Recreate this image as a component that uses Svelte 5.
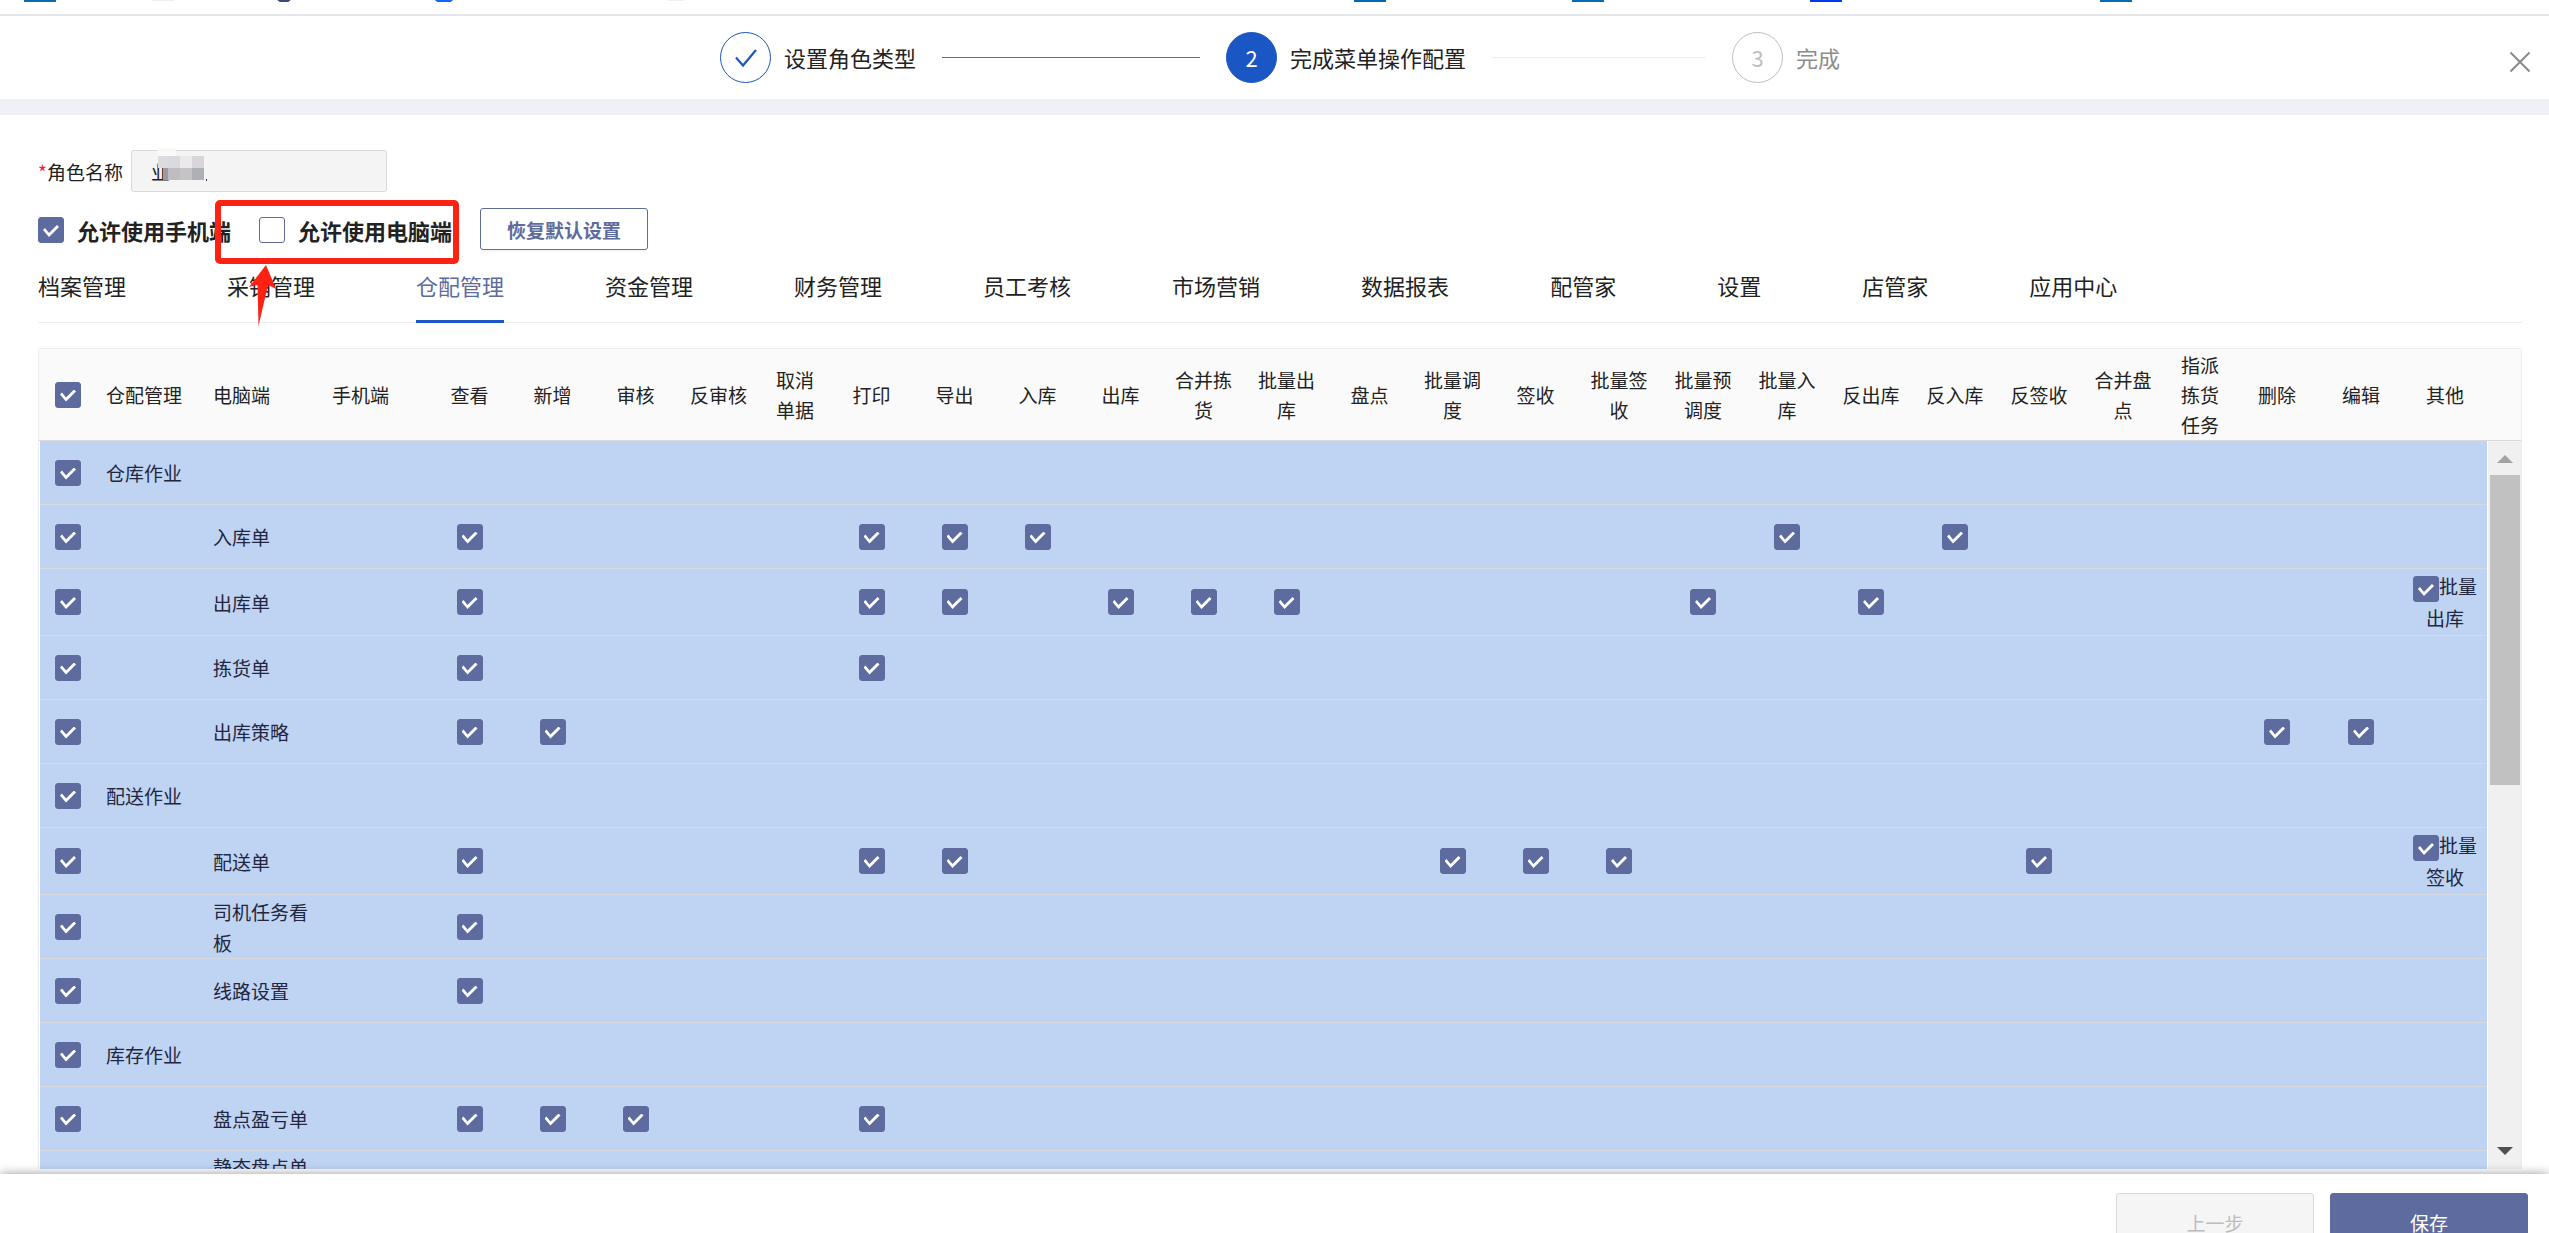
<script>
  const tabs = ['档案管理', '采销管理', '仓配管理', '资金管理', '财务管理', '员工考核', '市场营销', '数据报表', '配管家', '设置', '店管家', '应用中心'];
  const activeTab = '仓配管理';

  const actions = [
    ['查看', 83], ['新增', 83], ['审核', 83], ['反审核', 83], ['取消单据', 70], ['打印', 83], ['导出', 83],
    ['入库', 83], ['出库', 83], ['合并拣货', 83], ['批量出库', 83], ['盘点', 83], ['批量调度', 83], ['签收', 83],
    ['批量签收', 84], ['批量预调度', 84], ['批量入库', 84], ['反出库', 84], ['反入库', 84], ['反签收', 84],
    ['合并盘点', 84], ['指派拣货任务', 70], ['删除', 84], ['编辑', 84], ['其他', 84]
  ];
  const widths = [56, 107, 119, 106, ...actions.map((a) => a[1])];

  const rows = [
    { group: '仓库作业' },
    { name: '入库单', on: ['查看', '打印', '导出', '入库', '批量入库', '反入库'] },
    { name: '出库单', on: ['查看', '打印', '导出', '出库', '合并拣货', '批量出库', '批量预调度', '反出库'], other: '批量出库' },
    { name: '拣货单', on: ['查看', '打印'] },
    { name: '出库策略', on: ['查看', '新增', '删除', '编辑'] },
    { group: '配送作业' },
    { name: '配送单', on: ['查看', '打印', '导出', '批量调度', '签收', '批量签收', '反签收'], other: '批量签收' },
    { name: '司机任务看板', on: ['查看'] },
    { name: '线路设置', on: ['查看'] },
    { group: '库存作业' },
    { name: '盘点盈亏单', on: ['查看', '新增', '审核', '打印'] },
    { name: '静态盘点单', on: ['查看'], high: true }
  ];
</script>

{#snippet columns()}
  <colgroup>
    {#each widths as w}
      <col style="width: {w}px" />
    {/each}
  </colgroup>
{/snippet}

<div class="page">
  <div class="strip">
    <svg width="100%" height="2" aria-hidden="true">
      <rect x="24" width="32" height="2" fill="#0b6ab5" />
      <rect x="152" width="22" height="1" fill="#f0f0f0" />
      <circle cx="284" cy="-6" r="9" fill="#3d4b73" />
      <circle cx="444" cy="-8" r="12" fill="#1463ff" />
      <rect x="667" width="18" height="1" fill="#eef2f2" />
      <rect x="1354" width="32" height="2" fill="#0068b7" />
      <rect x="1572" width="32" height="2" fill="#0b6ab5" />
      <rect x="1810" width="32" height="2" fill="#0038f0" />
      <rect x="2100" width="32" height="2" fill="#0b6ab5" />
    </svg>
  </div>

  <header class="top">
    <ol class="steps">
      <li class="step">
        <span class="dot done">
          <svg width="24" height="20" viewBox="0 0 24 20" aria-hidden="true">
            <path d="M2 9.500 L9 17.500 L22 2" fill="none" stroke="#1a56c4" stroke-width="2.200" />
          </svg>
        </span>
        <span>设置角色类型</span>
        <span class="line passed"></span>
      </li>
      <li class="step">
        <span class="dot now">2</span>
        <span>完成菜单操作配置</span>
        <span class="line"></span>
      </li>
      <li class="step last">
        <span class="dot wait">3</span>
        <span>完成</span>
      </li>
    </ol>
    <button class="close" aria-label="关闭">
      <svg width="22" height="22" viewBox="0 0 22 22" aria-hidden="true">
        <path d="M1.500 1.500 L20.500 20.500 M20.500 1.500 L1.500 20.500" fill="none" stroke="#8a8a8a" stroke-width="2" />
      </svg>
    </button>
  </header>

  <main class="content">
    <div class="field">
      <label for="role"><i>*</i>角色名称</label>
      <span class="box">
        <input id="role" class="text" value="业" disabled />
        <svg class="mosaic" width="52" height="34" viewBox="0 0 52 34" aria-hidden="true">
          <rect x="0" y="0" width="18" height="8" fill="#f9f9f9" />
          <rect x="0" y="8" width="10" height="12" fill="#dddbdf" />
          <rect x="10" y="8" width="12" height="12" fill="#dadade" />
          <rect x="22" y="8" width="12" height="12" fill="#ebe9ec" />
          <rect x="34" y="8" width="12" height="12" fill="#dad5da" />
          <rect x="5" y="20" width="5" height="12" fill="#9b9ba1" />
          <rect x="10" y="20" width="12" height="12" fill="#bfbdc1" />
          <rect x="22" y="20" width="12" height="12" fill="#c6c3c5" />
          <rect x="34" y="20" width="12" height="12" fill="#adb0b5" />
          <rect x="48" y="31" width="1" height="2" fill="#333" />
        </svg>
      </span>
    </div>

    <div class="allow">
      <label><input type="checkbox" checked />允许使用手机端</label>
      <label class="marked">
        <input type="checkbox" />允许使用电脑端
        <span class="frame"></span>
        <svg class="arrow" width="30" height="62" viewBox="0 0 30 62" aria-hidden="true">
          <path d="M17 0 L27 24 L19 20 L9.500 61 L8.500 20 L0 22 Z" fill="#ff2212" />
        </svg>
      </label>
      <button class="reset">恢复默认设置</button>
    </div>

    <nav class="tabs">
      {#each tabs as t}
        <a href="#{t}" class:active={t === activeTab}>{t}</a>
      {/each}
    </nav>

    <section class="grid">
      <div class="head">
        <table>
          {@render columns()}
          <thead>
            <tr>
              <th><input type="checkbox" checked aria-label="全选" /></th>
              <th class="left">仓配管理</th>
              <th class="left">电脑端</th>
              <th class="left">手机端</th>
              {#each actions as [title]}
                <th>{title}</th>
              {/each}
            </tr>
          </thead>
        </table>
      </div>
      <div class="body">
        <div class="view">
          <table>
            {@render columns()}
            <tbody>
              {#each rows as row}
                <tr class:tall={row.other} class:high={row.high}>
                  <td><input type="checkbox" checked aria-label={row.group ?? row.name} /></td>
                  <td class="left">{row.group ?? ''}</td>
                  <td class="left name">{row.name ?? ''}</td>
                  <td></td>
                  {#each actions as [title]}
                    <td>
                      {#if title === '其他' && row.other}
                        <label class="other"><input type="checkbox" checked />{row.other}</label>
                      {:else if row.on?.includes(title)}
                        <input type="checkbox" checked aria-label="{row.name} {title}" />
                      {/if}
                    </td>
                  {/each}
                </tr>
              {/each}
            </tbody>
          </table>
        </div>
        <div class="bar" aria-hidden="true">
          <svg width="16" height="8" viewBox="0 0 16 8"><path d="M8 0 L16 8 H0 Z" fill="#a3a3a3" /></svg>
          <div class="track"><div class="thumb"></div></div>
          <svg width="16" height="8" viewBox="0 0 16 8"><path d="M0 0 H16 L8 8 Z" fill="#505050" /></svg>
        </div>
      </div>
    </section>
  </main>

  <footer class="foot">
    <button class="prev" disabled>上一步</button>
    <button class="save">保存</button>
  </footer>
</div>

<style>
  :global(body) {
    margin: 0;
    background: #fff;
  }
  .page,
  .page button,
  .page input {
    font-family: "Noto Sans CJK SC", "Noto Sans", sans-serif;
  }
  .page {
    display: flex;
    flex-direction: column;
    height: 100vh;
    overflow: hidden;
    color: #222;
    font-size: 19px;
    line-height: 31px;
  }
  .page * {
    box-sizing: border-box;
  }
  .strip {
    flex: none;
    height: 16px;
    border-bottom: 2px solid #e3e7ec;
    overflow: hidden;
  }
  .strip svg {
    display: block;
  }

  .top {
    flex: none;
    display: flex;
    align-items: center;
    justify-content: space-between;
    height: 99px;
    padding: 0 18px 0 28.25%;
    border-bottom: 16px solid #f0f1f6;
  }
  .steps {
    display: flex;
    width: 1120px;
    margin: 0;
    padding: 0;
    list-style: none;
    font-size: 22px;
  }
  .step {
    display: flex;
    flex: 1;
    align-items: center;
    gap: 13px;
    white-space: nowrap;
  }
  .step.last {
    flex: none;
    color: #8c8c8c;
  }
  .dot {
    display: grid;
    place-items: center;
    width: 51px;
    height: 51px;
    border: 1px solid #1a56c4;
    border-radius: 50%;
  }
  .dot.now {
    background: #1a56c4;
    color: #fff;
  }
  .dot.wait {
    border-color: #bfbfbf;
    color: #bfbfbf;
  }
  .line {
    flex: 1;
    height: 1px;
    margin: 0 26px 0 13px;
    background: #efefef;
  }
  .line.passed {
    background: #5d6b9f;
  }
  .close {
    display: flex;
    padding: 0;
    margin-top: 8px;
    border: 0;
    background: none;
  }

  .content {
    flex: 1;
    display: flex;
    flex-direction: column;
    min-height: 0;
    padding: 35px 27px 5px 38px;
  }
  .field {
    display: flex;
    align-items: center;
    gap: 8px;
  }
  .field i {
    color: #f5222d;
    font-style: normal;
  }
  .box {
    position: relative;
    display: flex;
  }
  .text {
    width: 256px;
    height: 42px;
    padding: 0 19px;
    border: 1px solid #d9d9d9;
    border-radius: 3px;
    background: #f4f4f4;
    color: #222;
    font-size: 19px;
  }
  .mosaic {
    position: absolute;
    left: 27px;
    top: -2px;
  }

  input[type='checkbox'] {
    appearance: none;
    display: grid;
    place-items: center;
    flex: none;
    width: 26px;
    height: 26px;
    margin: 0 auto;
    border: 1px solid #5d6b9f;
    border-radius: 3px;
    background: #fff;
  }
  input[type='checkbox']:checked {
    background: #5d6b9f;
  }
  input[type='checkbox']:checked::after {
    content: '';
    width: 16px;
    height: 12px;
    margin-top: 2px;
    background: #fff;
    clip-path: polygon(0 5px, 2px 3px, 6px 8px, 14px 0, 16px 2px, 6px 12px);
  }
  .other {
    line-height: 32px;
  }
  .other input[type='checkbox'] {
    display: inline-grid;
    margin: -4px 0;
    vertical-align: -2px;
  }

  .allow {
    display: flex;
    align-items: center;
    height: 42px;
    margin-top: 16px;
    font-size: 22px;
    font-weight: 700;
  }
  .allow label {
    display: flex;
    align-items: center;
    gap: 13px;
    margin-right: 28px;
    padding-top: 2px;
  }
  .allow .marked {
    position: relative;
  }
  .frame {
    position: absolute;
    left: -44px;
    top: -13px;
    width: 244px;
    height: 64px;
    border: 6px solid #ff2212;
    border-radius: 5px;
  }
  .arrow {
    position: absolute;
    left: -10px;
    top: 52px;
  }
  .reset {
    height: 42px;
    padding: 0 26px;
    border: 1px solid #5d6b9f;
    border-radius: 3px;
    background: #fff;
    box-shadow: 0 2px 2px rgba(0, 0, 0, 0.04);
    color: #5d6b9f;
    font-size: 19px;
    font-weight: 700;
  }

  .tabs {
    display: flex;
    gap: 101px;
    height: 73px;
    border-bottom: 1px solid #eee;
    font-size: 22px;
    white-space: nowrap;
  }
  .tabs a {
    height: 73px;
    padding-top: 20px;
    color: #222;
    text-decoration: none;
  }
  .tabs a.active {
    border-bottom: 3px solid #1a56c4;
    color: #5d6b9f;
  }

  .grid {
    flex: 1;
    display: flex;
    flex-direction: column;
    min-height: 0;
    margin-top: 25px;
    border: 1px solid #ededed;
    border-bottom: 0;
    border-radius: 3px 3px 0 0;
  }
  table {
    width: 100%;
    table-layout: fixed;
    border-collapse: separate;
    border-spacing: 0;
  }
  .head {
    flex: none;
    padding: 0 34px 0 1px;
    border-bottom: 1px solid #d9d9d9;
    background: #fafafa;
  }
  th {
    height: 91px;
    padding: 0 10px;
    font-weight: 400;
    line-height: 30px;
  }
  td {
    height: 64px;
    padding: 0 8px;
    border-bottom: 1px solid #d6d9e2;
    color: #23263f;
    text-align: center;
  }
  .tall td {
    height: 67px;
  }
  .left {
    padding: 0 10px;
    text-align: left;
  }
  .high .name {
    vertical-align: top;
  }
  .body {
    flex: 1;
    display: flex;
    min-height: 0;
    padding-left: 1px;
  }
  .view {
    flex: 1;
    overflow: hidden;
    background: #bfd4f3;
  }
  .bar {
    flex: none;
    display: flex;
    flex-direction: column;
    align-items: center;
    width: 33px;
    margin-left: 1px;
    padding: 14px 0;
    background: #f0f0f0;
  }
  .bar svg {
    flex: none;
  }
  .track {
    flex: 1;
    width: 30px;
    padding: 12px 0;
  }
  .thumb {
    height: 47%;
    background: #c1c1c1;
  }

  .foot {
    flex: none;
    position: relative;
    display: flex;
    justify-content: flex-end;
    gap: 16px;
    height: 59px;
    padding: 19px 21px 0;
    background: #fff;
    box-shadow: 0 0 10px rgba(0, 0, 0, 0.4);
  }
  .foot button {
    flex: none;
    width: 198px;
    height: 58px;
    border: 1px solid #d9d9d9;
    border-radius: 3px;
    background: #f5f5f5;
    color: #bdbdbd;
    font-size: 19px;
  }
  .foot .save {
    border-color: #5d6b9f;
    background: #5d6b9f;
    color: #fff;
  }
</style>
